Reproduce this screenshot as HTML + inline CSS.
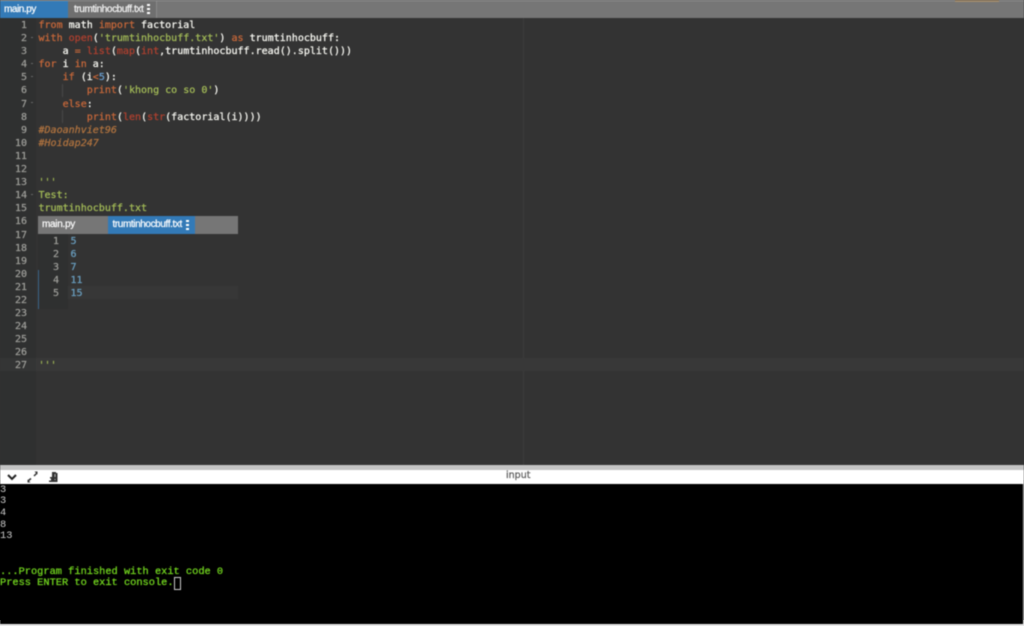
<!DOCTYPE html>
<html><head><meta charset="utf-8"><style>
html,body{margin:0;padding:0;width:1024px;height:626px;overflow:hidden;background:linear-gradient(#333 0,#333 480px,#000 480px,#000 620px,#e8e8e8 620px)}
#w{position:relative;width:1024px;height:626px;overflow:hidden;filter:blur(0.4px)}
.a{position:absolute}
.t{font-family:"Liberation Sans",sans-serif;white-space:pre;-webkit-text-stroke:.2px #fff}
.m{font-family:"DejaVu Sans Mono",monospace;font-size:10.03px;line-height:13.1px;white-space:pre;color:#f8f8f2;-webkit-text-stroke:.25px currentColor}
.n{font-family:"DejaVu Sans Mono",monospace;font-size:10.03px;line-height:13.1px;color:#a0a09c;text-align:right;white-space:pre;-webkit-text-stroke:.2px currentColor}
.s{color:#a3bb57}.f{color:#b0402f}
.cm{color:#b0733f;font-style:italic}.nb{color:#6a9fd0}
.kw{color:#c8683a}
</style></head><body><div id="w">
<div class="a" style="left:0;top:0;width:1024px;height:18px;background:#767676"></div>
<div class="a" style="left:0;top:0;width:1024px;height:1px;background:#9a9a9a"></div>
<div class="a" style="left:955px;top:0;width:44px;height:2px;background:#a08a6c"></div>
<div class="a" style="left:0;top:1px;width:68px;height:17px;background:#337ab7"></div>
<div class="a" style="left:68px;top:1px;width:88px;height:17px;background:#6f6f6f"></div>
<div class="a" style="left:156px;top:1px;width:1px;height:17px;background:#8a8a8a"></div>
<div class="a t" style="left:4px;top:3px;font-size:10px;line-height:13px;color:#fff;letter-spacing:-.45px">main.py</div>
<div class="a t" style="left:74px;top:3px;font-size:10px;line-height:13px;color:#eee;letter-spacing:-.4px">trumtinhocbuff.txt</div>
<div class="a" style="left:147px;top:4px;width:3px;height:2px;background:#fff;box-shadow:0 4px 0 #fff,0 8px 0 #fff"></div>

<div class="a" style="left:0;top:18px;width:1024px;height:447px;background:#333333"></div>
<div class="a" style="left:0;top:18px;width:36px;height:447px;background:#2f3030"></div>
<div class="a" style="left:523px;top:18px;width:1px;height:447px;background:#3b3b3b"></div>
<div class="a" style="left:0;top:358px;width:1024px;height:13px;background:#383838"></div>
<div class="a" style="left:0;top:358px;width:36px;height:13px;background:#343535"></div>

<div class="a n" style="left:0;top:19px;width:27px">1
2
3
4
5
6
7
8
9
10
11
12
13
14
15
16
17
18
19
20
21
22
23
24
25
26
27</div>
<div class="a" style="left:31px;top:37px;width:2px;height:1px;background:#666"></div>
<div class="a" style="left:31px;top:63px;width:2px;height:1px;background:#666"></div>
<div class="a" style="left:31px;top:76px;width:2px;height:1px;background:#666"></div>
<div class="a" style="left:31px;top:102px;width:2px;height:1px;background:#666"></div>
<div class="a" style="left:31px;top:194px;width:2px;height:1px;background:#666"></div>
<div class="a" style="left:62px;top:84px;width:1px;height:13px;background:#474747"></div>
<div class="a" style="left:62px;top:110px;width:1px;height:13px;background:#474747"></div>

<div class="a m" style="left:38.5px;top:19px"><span class="kw">from</span> math <span class="kw">import</span> factorial
<span class="kw">with</span> <span class="f">open</span>(<span class="s">'trumtinhocbuff.txt'</span>) <span class="kw">as</span> trumtinhocbuff:
    a <span class="kw">=</span> <span class="f">list</span>(<span class="f">map</span>(<span class="f">int</span>,trumtinhocbuff.read().split()))
<span class="kw">for</span> i <span class="kw">in</span> a:
    <span class="kw">if</span> (i<span class="kw">&lt;</span><span class="nb">5</span>):
        <span class="kw">print</span>(<span class="s">'khong co so 0'</span>)
    <span class="kw">else</span>:
        <span class="kw">print</span>(<span class="f">len</span>(<span class="f">str</span>(factorial(i))))
<span class="cm">#Daoanhviet96</span>
<span class="cm">#Hoidap247</span>


<span class="s">'''</span>
<span class="s">Test:</span>
<span class="s">trumtinhocbuff.txt</span>











<span class="s">'''</span></div>

<div class="a" style="left:38px;top:216px;width:200px;height:18px;background:#767676"></div>
<div class="a" style="left:108px;top:216px;width:87px;height:18px;background:#337ab7"></div>
<div class="a t" style="left:42px;top:218px;font-size:10px;line-height:13px;color:#fff;letter-spacing:-.3px">main.py</div>
<div class="a t" style="left:112.5px;top:218px;font-size:10px;line-height:13px;color:#fff;letter-spacing:-.4px">trumtinhocbuff.txt</div>
<div class="a" style="left:185.5px;top:220px;width:3px;height:2px;background:#fff;box-shadow:0 4px 0 #fff,0 8px 0 #fff"></div>
<div class="a" style="left:38px;top:234px;width:30px;height:75px;background:#2f3030"></div>
<div class="a" style="left:38px;top:270px;width:1px;height:39px;background:#3a6488"></div>
<div class="a" style="left:68px;top:286px;width:170px;height:13px;background:#373737"></div>
<div class="a n" style="left:38px;top:235px;width:21px">1
2
3
4
5</div>
<div class="a m" style="left:70.5px;top:235px;color:#6a9fc0">5
6
7
11
15</div>

<div class="a" style="left:0;top:465px;width:1024px;height:5px;background:#c4c4c4"></div>
<div class="a" style="left:0;top:470px;width:1024px;height:14px;background:#fff"></div>
<svg class="a" style="left:0;top:470px" width="70" height="14" viewBox="0 0 70 14">
<path d="M8 5 L12 9 L16 5" fill="none" stroke="#222" stroke-width="2"/>
<path d="M28 11 L31 8.5 M34 6 L37 3" fill="none" stroke="#333" stroke-width="1.5"/>
<path d="M27.5 12.5 l3 0 -3 -3z M37.5 1.5 l-3 0 3 3z" fill="#333"/>
<path d="M52 2 h4 v1 h1.5 v9 h-8.5 v-1.5 h2 v-2 h-1 v-1.5 h2z" fill="#333"/>
<path d="M55 4 v3 M55 9 v1" stroke="#bbb" stroke-width="1"/>
</svg>
<div class="a" style="left:506px;top:470px;font-family:'DejaVu Sans',sans-serif;font-size:9.5px;line-height:11px;color:#555;-webkit-text-stroke:.2px #555">input</div>

<div class="a" style="left:0;top:484px;width:1024px;height:140px;background:#000"></div>
<div class="a" style="left:1023px;top:484px;width:1px;height:140px;background:#ddd"></div>
<div class="a" style="left:0;top:624px;width:1024px;height:2px;background:#e8e8e8"></div>
<div class="a" style="left:0;top:484.5px;font-family:'Liberation Mono',monospace;font-size:10.33px;line-height:11.72px;white-space:pre;color:#ccc">3
3
4
8
13</div>
<div class="a" style="left:0;top:566.5px;font-family:'Liberation Mono',monospace;font-size:10.33px;line-height:11.72px;white-space:pre;color:#6fd01e;-webkit-text-stroke:.3px #6fd01e">...Program finished with exit code 0
Press ENTER to exit console.</div>
<div class="a" style="left:174px;top:577px;width:5px;height:11px;border:1px solid #ccc"></div>
</div></body></html>
